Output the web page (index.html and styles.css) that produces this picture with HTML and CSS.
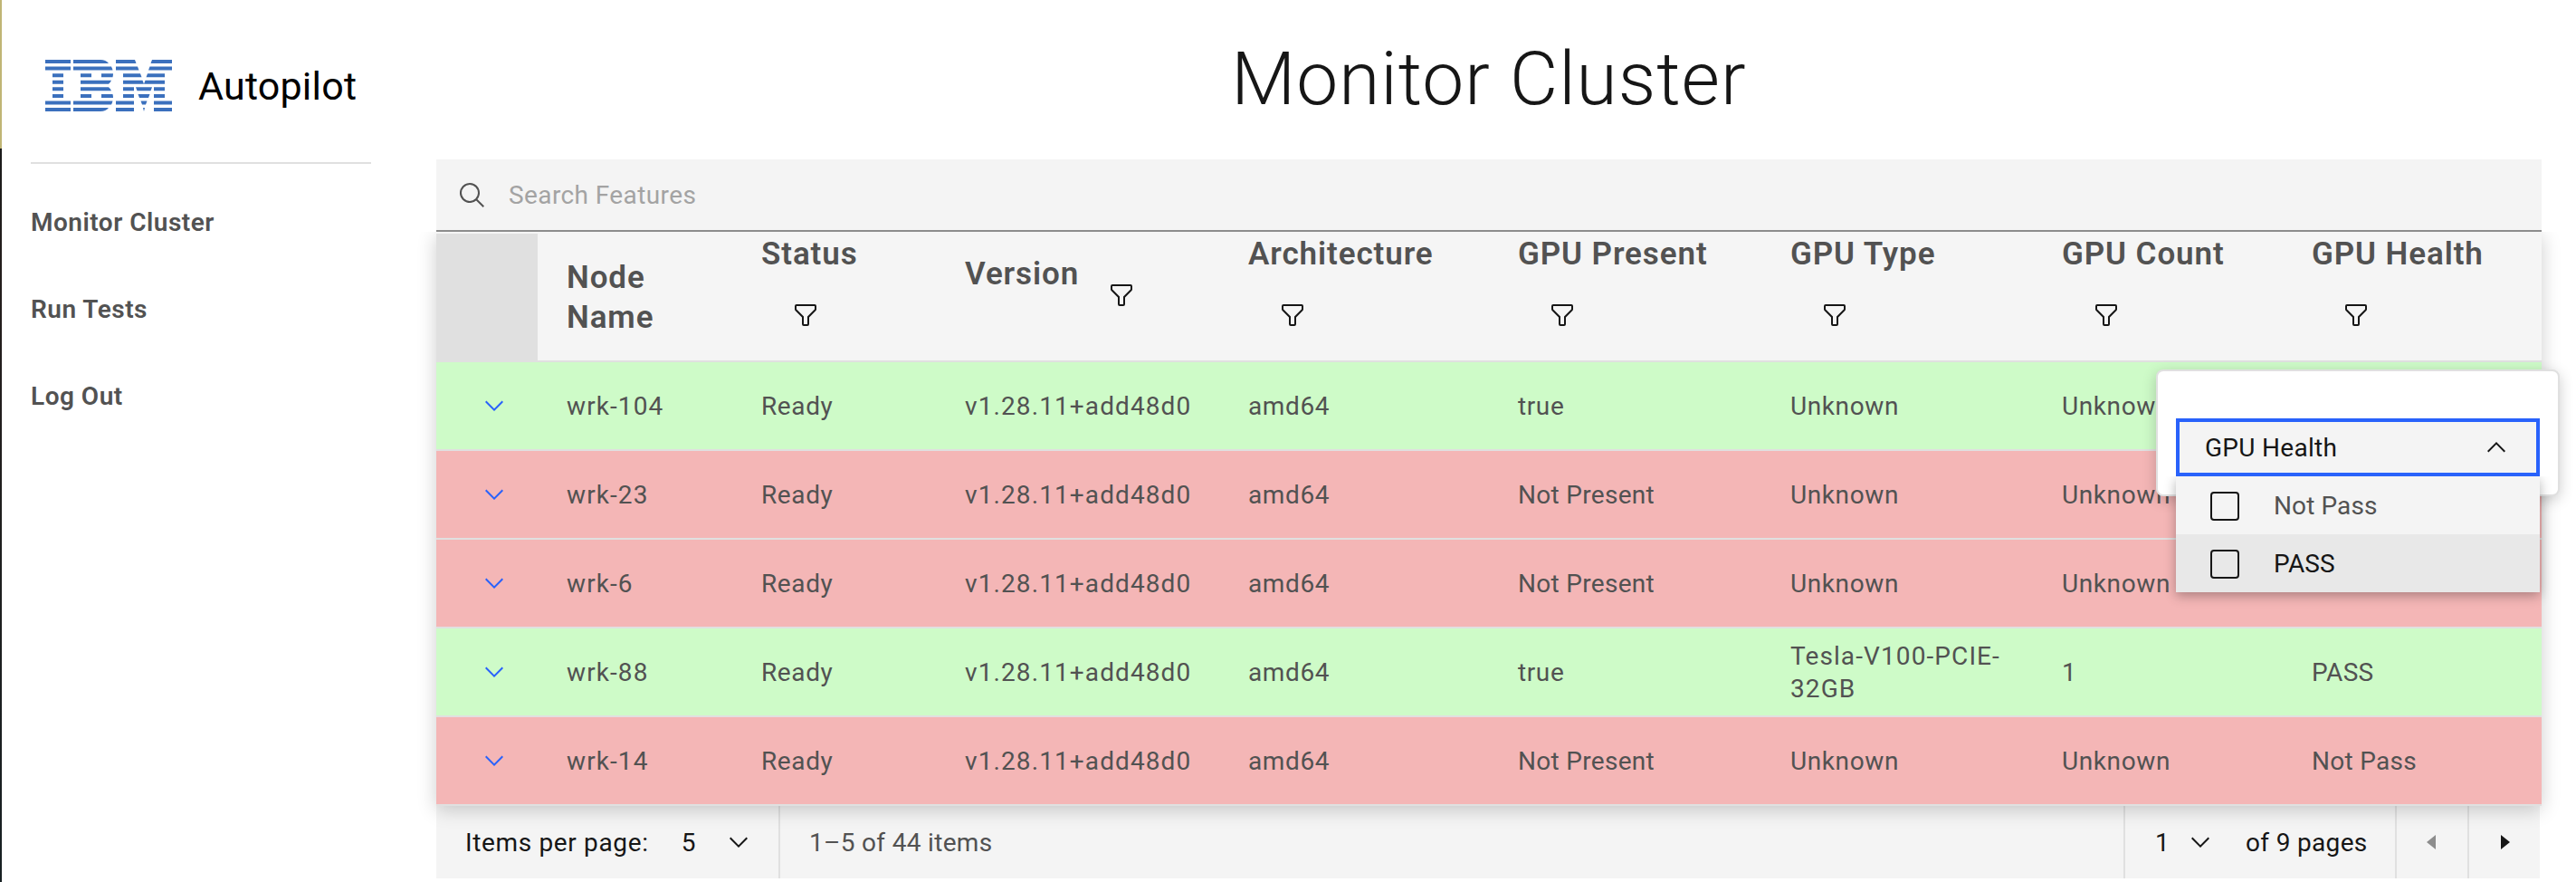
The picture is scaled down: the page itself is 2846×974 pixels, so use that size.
FILE: index.html
```html
<!DOCTYPE html>
<html lang="en">
<head>
<meta charset="utf-8">
<title>Autopilot – Monitor Cluster</title>
<link rel="stylesheet" href="styles.css">
</head>
<body>
<svg class="defs" aria-hidden="true">
  <symbol id="filter" viewBox="0 0 32 32"><path d="M18 28H14a2 2 0 0 1-2-2V18.41L4.59 11A2 2 0 0 1 4 9.59V6A2 2 0 0 1 6 4H26a2 2 0 0 1 2 2V9.59A2 2 0 0 1 27.41 11L20 18.41V26A2 2 0 0 1 18 28ZM6 6V9.59l8 8V26h4V17.59l8-8V6Z"/></symbol>
  <symbol id="chevron" viewBox="0 0 16 16"><path d="M8 11 3 6l.7-.7L8 9.6l4.300-4.300L13 6z"/></symbol>
  <symbol id="search" viewBox="0 0 32 32"><path d="M29 27.586 21.448 20.034A11.020 11.020 0 1 0 20.034 21.448L27.586 29ZM4 13a9 9 0 1 1 9 9A9.010 9.010 0 0 1 4 13Z"/></symbol>
</svg>
<div class="app">
  <div class="edge"></div>
  <aside class="sidebar">
    <div class="brand">
      <svg class="logo" viewBox="0 0 140 57" role="img" aria-label="IBM">
        <path d="M0 0h28v4H0zM31 0h30q6 0 9 4H31zM78 0h21l1.500 4H78zM118 0h22v4h-23.500z"/>
        <path d="M0 7.600h28v4H0zM31 7.600h42q1 2 1.500 4H31zM78 7.600h24l1.500 4H78zM115.500 7.600H140v4h-26z"/>
        <path d="M8 15.200h12v4H8zM39 15.200h12v4H39zM62 15.200h13q0 2-.5 4H62zM86 15.200h19l1.500 4H86zM113 15.200h19v4h-20.500z"/>
        <path d="M8 22.700h12v4H8zM39 22.700h34q-1 2.500-3 4H39zM86 22.700h21.500l1.500 4H86zM110.500 22.700H132v4h-23z"/>
        <path d="M8 30.300h12v4H8zM39 30.300h31q2 1.500 3 4H39zM86 30.300h12v4H86zM100 30.300h18l-1.500 4h-15zM120 30.300h12v4h-12z"/>
        <path d="M8 37.900h12v4H8zM39 37.900h12v4H39zM62 37.900h12.500q.5 2 .5 4H62zM86 37.900h12v4H86zM102.500 37.900h13l-1.500 4h-10zM120 37.900h12v4h-12z"/>
        <path d="M0 45.400h28v4H0zM31 45.400h43.500q-.5 2-1.500 4H31zM78 45.400h20v4H78zM105.500 45.400h7l-1.500 4h-4zM120 45.400h20v4h-20z"/>
        <path d="M0 53h28v4H0zM31 53h39q-3 4-9 4H31zM78 53h20v4H78zM108 53h2l-1 4zM120 53h20v4h-20z"/>
      </svg>
      <span class="brand-name">Autopilot</span>
    </div>
    <nav class="nav">
      <a>Monitor Cluster</a>
      <a>Run Tests</a>
      <a>Log Out</a>
    </nav>
  </aside>
  <main class="main">
    <h1 class="title">Monitor Cluster</h1>
    <div class="search"><svg class="i32"><use href="#search"/></svg><span>Search Features</span></div>
    <div class="table">
      <div class="row head">
        <div class="corner"></div>
        <div class="th plain">Node Name</div>
        <div class="th"><span>Status</span><svg class="i32"><use href="#filter"/></svg></div>
        <div class="th inline"><span>Version</span><svg class="i32"><use href="#filter"/></svg></div>
        <div class="th"><span>Architecture</span><svg class="i32"><use href="#filter"/></svg></div>
        <div class="th"><span>GPU Present</span><svg class="i32"><use href="#filter"/></svg></div>
        <div class="th"><span>GPU Type</span><svg class="i32"><use href="#filter"/></svg></div>
        <div class="th"><span>GPU Count</span><svg class="i32"><use href="#filter"/></svg></div>
        <div class="th"><span>GPU Health</span><svg class="i32"><use href="#filter"/></svg>
          <div class="popover">
            <div class="field"><span>GPU Health</span><svg class="i32 up"><use href="#chevron"/></svg></div>
            <div class="menu">
              <div class="option"><i class="box"></i><span>Not Pass</span></div>
              <div class="option active"><i class="box"></i><span>PASS</span></div>
            </div>
          </div>
        </div>
      </div>
      <div class="row pass"><div class="exp"><svg class="i32"><use href="#chevron"/></svg></div><div class="wide">wrk-104</div><div>Ready</div><div class="wide">v1.28.11+add48d0</div><div>amd64</div><div>true</div><div>Unknown</div><div>Unknown</div><div></div></div>
      <div class="row fail"><div class="exp"><svg class="i32"><use href="#chevron"/></svg></div><div class="wide">wrk-23</div><div>Ready</div><div class="wide">v1.28.11+add48d0</div><div>amd64</div><div class="snug">Not Present</div><div>Unknown</div><div>Unknown</div><div></div></div>
      <div class="row fail"><div class="exp"><svg class="i32"><use href="#chevron"/></svg></div><div class="wide">wrk-6</div><div>Ready</div><div class="wide">v1.28.11+add48d0</div><div>amd64</div><div class="snug">Not Present</div><div>Unknown</div><div>Unknown</div><div></div></div>
      <div class="row pass"><div class="exp"><svg class="i32"><use href="#chevron"/></svg></div><div class="wide">wrk-88</div><div>Ready</div><div class="wide">v1.28.11+add48d0</div><div>amd64</div><div>true</div><div class="wide">Tesla-V100-PCIE-<br>32GB</div><div>1</div><div class="snug">PASS</div></div>
      <div class="row fail"><div class="exp"><svg class="i32"><use href="#chevron"/></svg></div><div class="wide">wrk-14</div><div>Ready</div><div class="wide">v1.28.11+add48d0</div><div>amd64</div><div class="snug">Not Present</div><div>Unknown</div><div>Unknown</div><div class="snug">Not Pass</div></div>
    </div>
    <div class="pager">
      <div class="cell size"><span class="ipp">Items per page:</span><span class="num">5</span><svg class="i32"><use href="#chevron"/></svg></div>
      <div class="cell range"><span>1–5 of 44 items</span></div>
      <div class="cell page"><span class="num">1</span><svg class="i32"><use href="#chevron"/></svg><span class="of">of 9 pages</span></div>
      <div class="cell step"><svg class="i32 off" viewBox="0 0 32 32"><path d="M20 24 10 16 20 8z"/></svg></div>
      <div class="cell step"><svg class="i32" viewBox="0 0 32 32"><path d="M12 8l10 8-10 8z"/></svg></div>
    </div>
  </main>
</div>
</body>
</html>
```
FILE: styles.css
```css
* { box-sizing: border-box; }
body {
  margin: 0;
  background: #fff;
  color: #161616;
  font: 400 28px/36px Roboto, "Noto Sans", sans-serif;
  letter-spacing: 0.32px;
  overflow: hidden;
}
.defs { position: absolute; width: 0; height: 0; }
.i32 { width: 32px; height: 32px; fill: #161616; flex: none; display: block; }
.app { display: flex; height: 974px; }
.edge { width: 2px; background: linear-gradient(#c0b575 164px, #1b1b1b 164px, #241e1c 300px, #182022); }

.sidebar { width: 480px; padding-left: 32px; }
.brand {
  width: 376px;
  height: 181px;
  padding: 10px 0 0 16px;
  border-bottom: 2px solid #e0e0e0;
  display: flex;
  align-items: center;
}
.logo { width: 140px; height: 57px; fill: #3b70bd; flex: none; }
.brand-name { margin-left: 29px; font-size: 43px; line-height: 56px; letter-spacing: 0.2px; color: #000; }
.nav { display: flex; flex-direction: column; padding-top: 17px; }
.nav a { height: 96px; line-height: 96px; font-weight: 600; letter-spacing: 0.5px; color: #525252; }

.main { width: 2326px; }
.title { margin: 0; height: 176px; padding-top: 38px; font-size: 82px; line-height: 98px; font-weight: 300; text-align: center; letter-spacing: 1px; }
.search {
  height: 80px;
  padding-left: 24px;
  background: #f4f4f4;
  border-bottom: 2px solid #8d8d8d;
  color: #a3a3a3;
  display: flex;
  align-items: center;
  gap: 24px;
}
.search span, .option span, .cell span, .field span { padding-top: 2px; }
.search span { letter-spacing: 0.4px; }
.search .i32 { fill: #525252; margin-top: 1px; }

.table { position: relative; box-shadow: 0 4px 20px rgba(0, 0, 0, .2); clip-path: inset(0 -60px -60px -60px); z-index: 1; }
.row {
  display: grid;
  grid-template-columns: 112px 215px 225px 313px 298px 301px 300px 276px 286px;
  height: 98px;
  align-items: center;
  border-bottom: 2px solid #e0e0e0;
  color: #525252;
}
.row > div { padding: 2px 0 0 32px; letter-spacing: 0.6px; }
.row > .wide { letter-spacing: 1.1px; }
.row > .snug { letter-spacing: 0.3px; }
.row.pass { background: #cefbc8; }
.row.fail { background: #f4b6b6; }
.row > .exp { padding: 0 0 0 48px; }
.exp .i32 { fill: #2962fb; }
.row.head { height: 144px; background: #f5f5f5; align-items: stretch; }
.row > .corner { background: #e0e0e0; margin: 2px 0 -2px; padding: 0; }
.row > .th { position: relative; font-size: 35px; line-height: 44px; font-weight: 600; padding-top: 3px; letter-spacing: 0.9px; }
.th .i32 { margin: 29px 0 0 33px; }
.row > .plain { padding: 29px 80px 0 32px; }
.row > .inline { display: flex; padding-top: 25px; }
.th.inline .i32 { margin: 29px 0 0 31px; }

.popover {
  position: absolute;
  left: -140px;
  top: 152px;
  width: 446px;
  height: 140px;
  padding: 52px 20px 0;
  background: #fff;
  border: 2px solid #e0e0e0;
  border-radius: 8px;
  box-shadow: 0 4px 16px rgba(0, 0, 0, .2);
  font-size: 28px;
  font-weight: 400;
  line-height: 36px;
  letter-spacing: 0.3px;
  color: #161616;
}
.field {
  height: 64px;
  padding: 0 28px;
  border: 4px solid #2962fb;
  background: #f4f4f4;
  display: flex;
  align-items: center;
  justify-content: space-between;
}
.th .popover .up { margin: 0; transform: rotate(180deg); }
.menu { position: relative; box-shadow: 0 4px 12px rgba(0, 0, 0, .3); clip-path: inset(0 -30px -30px -30px); }
.option { height: 64px; padding-left: 38px; display: flex; align-items: center; background: #f4f4f4; color: #525252; letter-spacing: 0.1px; }
.option.active { background: #e8e8e8; color: #161616; }
.box { width: 32px; height: 32px; margin: 2px 38px 0 0; border: 2px solid #161616; border-radius: 4px; }

.pager { width: 2324px; height: 80px; background: #f4f4f4; display: flex; }
.cell { display: flex; align-items: center; height: 80px; }
.size { width: 380px; padding-left: 32px; border-right: 2px solid #e0e0e0; }
.ipp { letter-spacing: 0.65px; }
.size .num { margin-left: 36px; }
.size .i32 { margin-left: 31px; }
.range { padding-left: 32px; color: #525252; }
.page { margin-left: auto; width: 300px; padding-left: 33px; border-left: 2px solid #e0e0e0; }
.page .i32 { margin: 0 34px 0 18px; }
.step { width: 80px; justify-content: center; border-left: 2px solid #e0e0e0; }
.off { fill: #8d8d8d; }
```
